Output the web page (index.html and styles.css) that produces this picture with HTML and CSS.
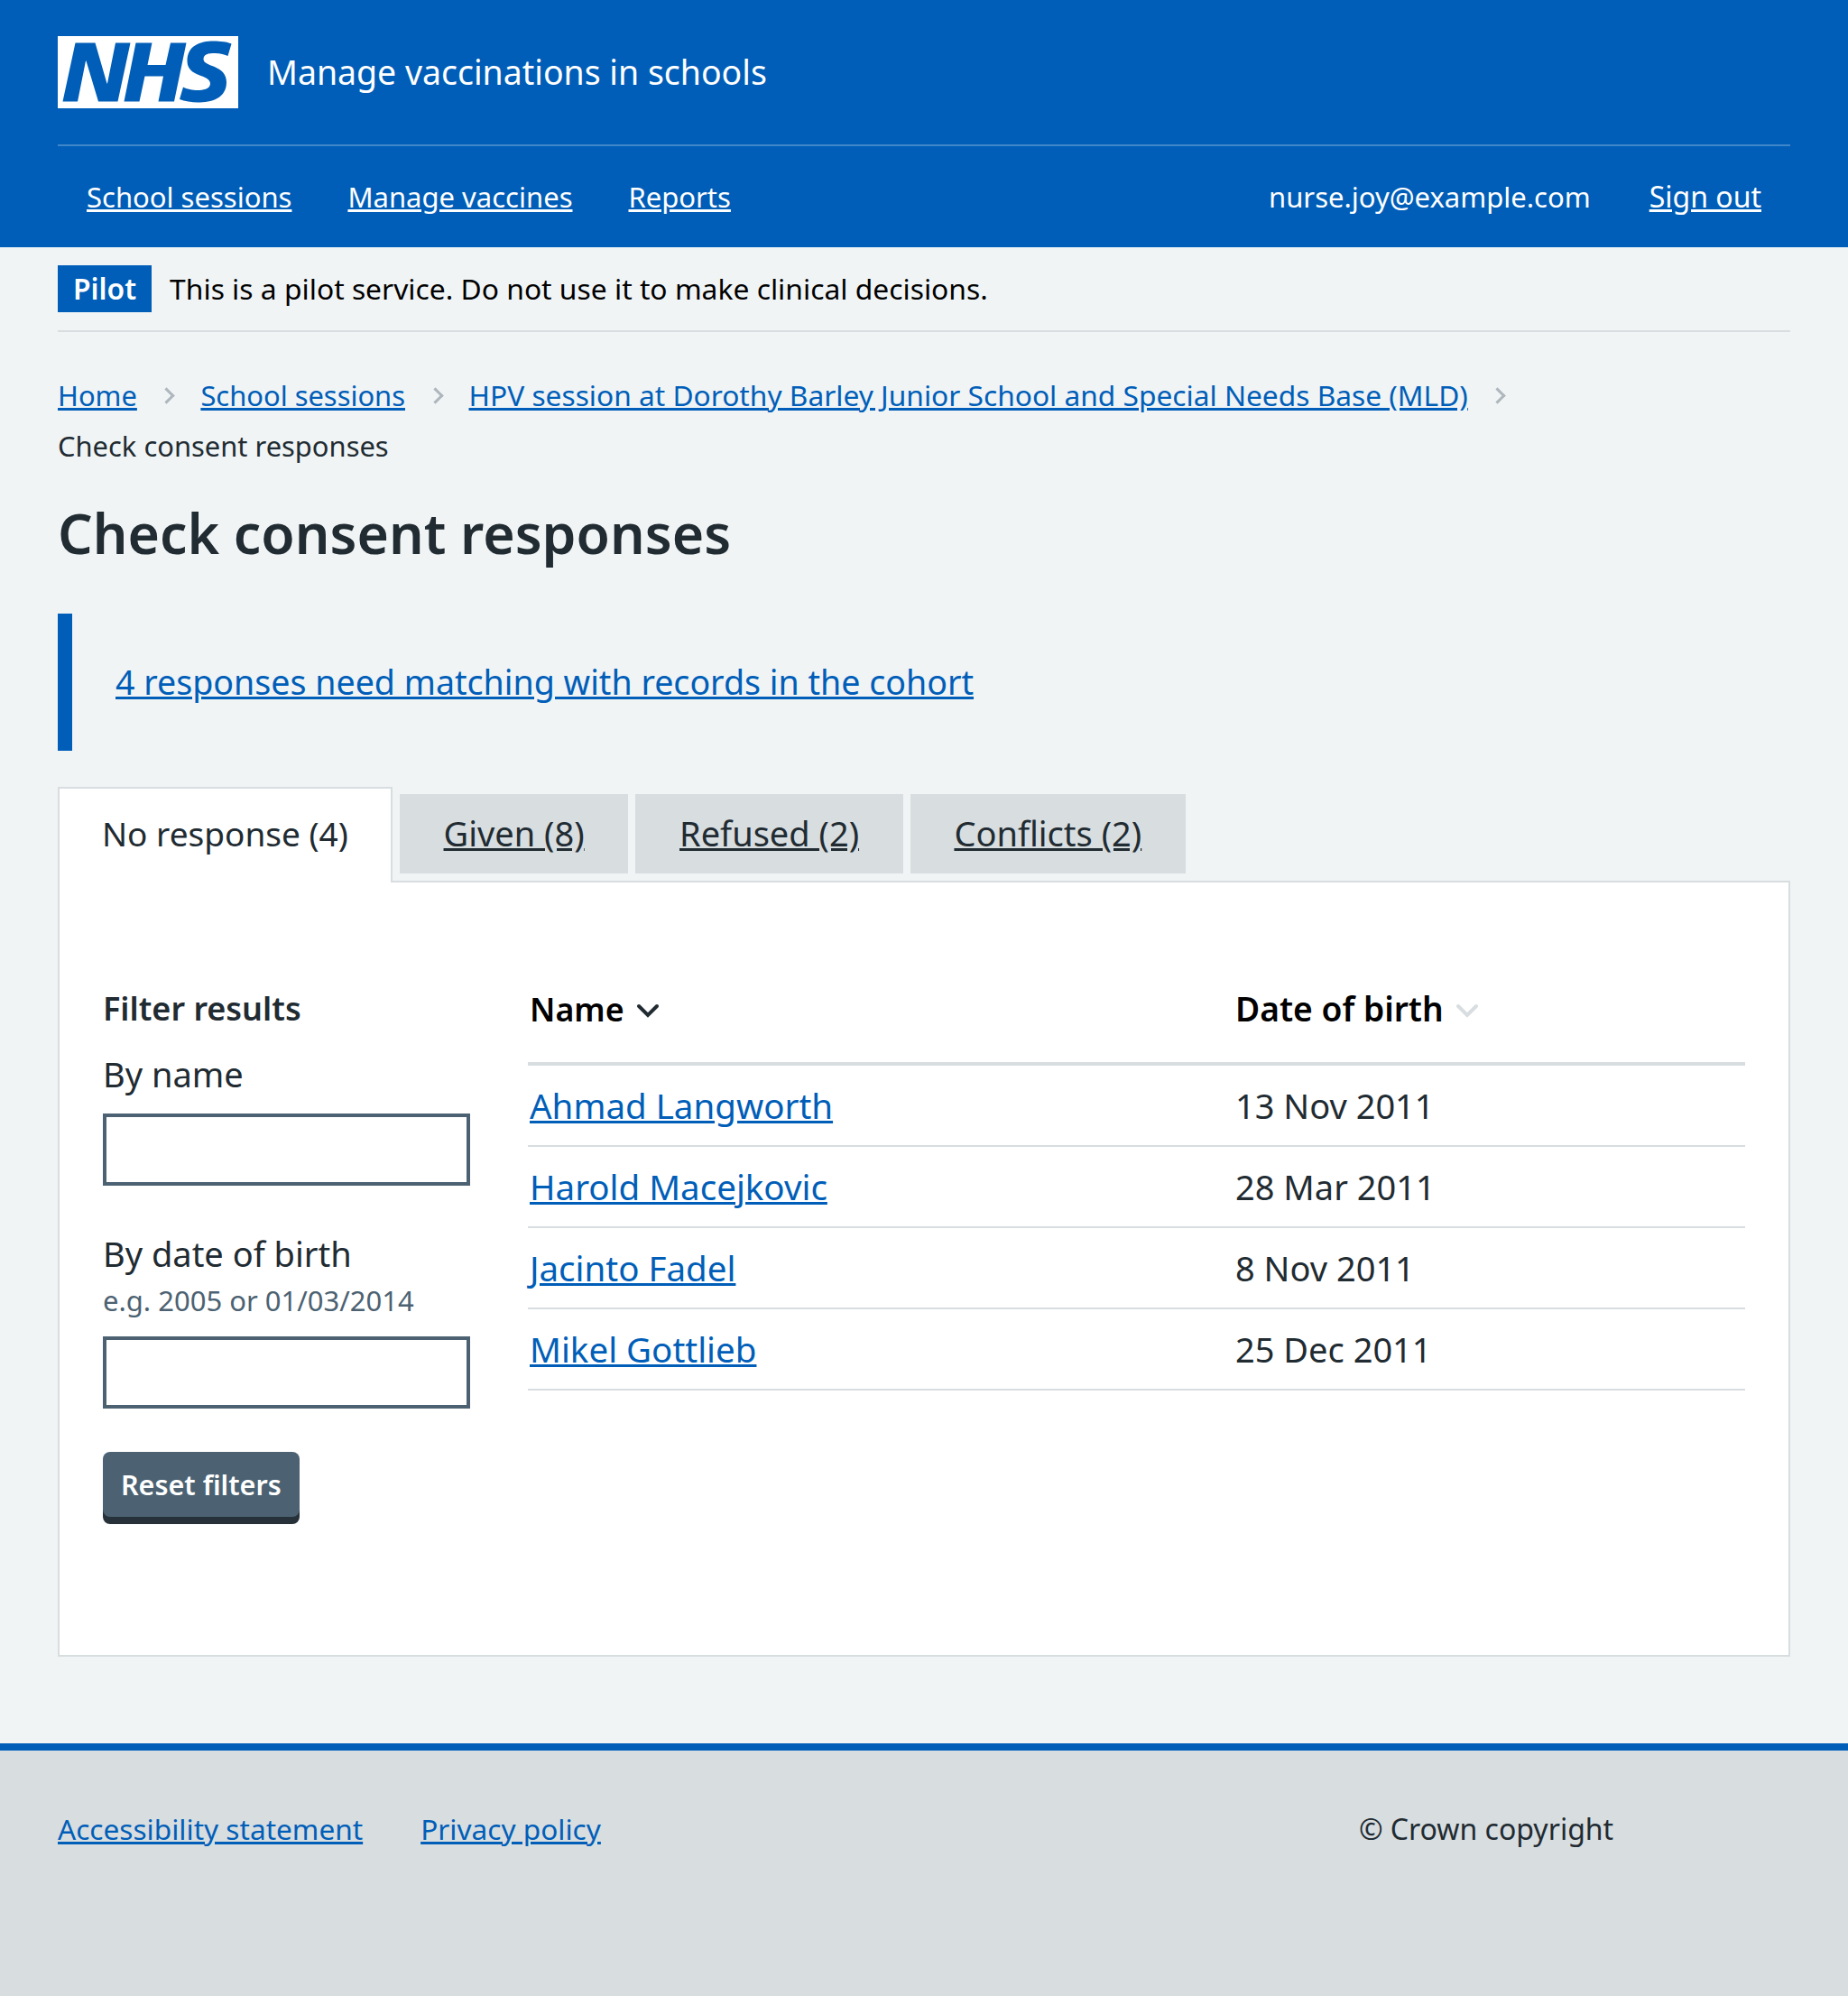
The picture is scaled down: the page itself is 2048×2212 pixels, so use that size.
FILE: index.html
```html
<!DOCTYPE html>
<html lang="en">
<head>
  <meta charset="UTF-8">
  <title>Check consent responses</title>
  <link rel="stylesheet" href="styles.css">
</head>
<body>
  <header class="site-header">
    <div class="brand">
      <svg class="logo" viewBox="0 0 40 16" aria-label="NHS">
        <path fill="#fff" d="M0 0h40v16H0z"/>
        <path fill="#005eb8" d="M3.9 1.5h4.4l2.6 9h.1l1.8-9h3.3l-2.8 13H9l-2.7-9h-.1l-1.8 9H1.1M17.3 1.5h3.6l-1 4.9h4L25 1.5h3.5l-2.7 13h-3.5l1.1-5.6h-4.1l-1.2 5.6h-3.4M37.7 4.4c-.7-.3-1.6-.6-2.9-.6-1.4 0-2.5.2-2.5 1.3 0 1.8 5.1 1.2 5.1 5.1 0 3.6-3.3 4.5-6.4 4.5-1.3 0-2.9-.3-4-.7l.8-2.7c.7.4 2.1.7 3.2.7s2.8-.2 2.8-1.5c0-2.1-5.1-1.3-5.1-5 0-3.4 2.9-4.4 5.8-4.4 1.6 0 3.1.2 4 .6"/>
      </svg>
      <span class="service-name">Manage vaccinations in schools</span>
    </div>
    <nav class="main-nav">
      <a href="#">School sessions</a>
      <a href="#">Manage vaccines</a>
      <a href="#">Reports</a>
      <span class="nav-user">nurse.joy@example.com</span>
      <a class="nav-signout" href="#">Sign out</a>
    </nav>
  </header>

  <div class="phase-banner">
    <strong class="phase-tag">Pilot</strong>
    <span>This is a pilot service. Do not use it to make clinical decisions.</span>
  </div>

  <main class="content">
    <ol class="breadcrumb">
      <li class="crumb-short"><a href="#">Home</a></li>
      <li class="crumb-short"><a href="#">School sessions</a></li>
      <li><a href="#">HPV session at Dorothy Barley Junior School and Special Needs Base (MLD)</a></li>
      <li class="crumb-short breadcrumb-current">Check consent responses</li>
    </ol>

    <h1>Check consent responses</h1>

    <div class="inset-text">
      <a href="#">4 responses need matching with records in the cohort</a>
    </div>

    <div class="tabs">
      <span class="tab tab-selected">No response (4)</span>
      <a class="tab" href="#">Given (8)</a>
      <a class="tab" href="#">Refused (2)</a>
      <a class="tab" href="#">Conflicts (2)</a>
    </div>

    <section class="panel">
      <form class="filters">
        <h2>Filter results</h2>
        <label class="filter-label" for="name">By name</label>
        <input class="filter-input filter-input-name" type="text" id="name">
        <label class="filter-label" for="dob">By date of birth</label>
        <div class="hint">e.g. 2005 or 01/03/2014</div>
        <input class="filter-input" type="text" id="dob">
        <button class="button" type="button">Reset filters</button>
      </form>

      <table class="results">
        <thead>
          <tr>
            <th class="col-name">Name
              <svg class="sort-icon" viewBox="0 0 26 16"><path d="M3 3l10 10L23 3"/></svg>
            </th>
            <th>Date of birth
              <svg class="sort-icon sort-icon-off" viewBox="0 0 26 16"><path d="M3 3l10 10L23 3"/></svg>
            </th>
          </tr>
        </thead>
        <tbody>
          <tr><td><a href="#">Ahmad Langworth</a></td><td>13 Nov 2011</td></tr>
          <tr><td><a href="#">Harold Macejkovic</a></td><td>28 Mar 2011</td></tr>
          <tr><td><a href="#">Jacinto Fadel</a></td><td>8 Nov 2011</td></tr>
          <tr><td><a href="#">Mikel Gottlieb</a></td><td>25 Dec 2011</td></tr>
        </tbody>
      </table>
    </section>
  </main>

  <footer class="site-footer">
    <a href="#">Accessibility statement</a>
    <a href="#">Privacy policy</a>
    <span class="copyright">© Crown copyright</span>
  </footer>
</body>
</html>
```
FILE: styles.css
```css
body {
  margin: 0;
  background-color: #f0f4f5;
  color: #212b32;
  font-family: "Noto Sans", sans-serif;
  font-size: 38px;
  line-height: 56px;
}
a {
  color: #005eb8;
}

/* header */
.site-header {
  background-color: #005eb8;
  color: white;
  height: 274px;
  padding: 0 64px;
  box-sizing: border-box;
}
.site-header a {
  color: white;
}
.brand {
  display: flex;
  align-items: center;
  gap: 32px;
  height: 162px;
  border-bottom: 2px solid rgba(255, 255, 255, 0.25);
  box-sizing: border-box;
}
.logo {
  width: 200px;
  height: 80px;
}
.service-name {
  font-size: 37.45px;
}
.main-nav {
  display: flex;
  align-items: center;
  gap: 62px;
  height: 112px;
  padding: 0 32px;
  font-size: 31px;
}
.nav-user {
  margin-left: auto;
  margin-right: 3px;
}
.nav-signout {
  font-size: 32px;
}

/* phase banner */
.phase-banner {
  display: flex;
  align-items: center;
  gap: 20px;
  height: 94px;
  margin: 0 64px;
  border-bottom: 2px solid #d8dde0;
  box-sizing: border-box;
  color: #000;
  font-size: 31.8px;
}
.phase-tag {
  background-color: #005eb8;
  color: white;
  padding: 0 17px;
  line-height: 52px;
  font-weight: 600;
}

.content {
  padding: 0 64px;
}

/* breadcrumb */
.breadcrumb {
  list-style: none;
  display: flex;
  flex-wrap: wrap;
  margin: 0;
  padding: 42px 0 0;
  font-size: 31.7px;
  line-height: 56px;
}
.breadcrumb li {
  display: flex;
  align-items: center;
}
.breadcrumb li:not(.breadcrumb-current)::after {
  content: "";
  width: 10px;
  height: 10px;
  margin: 0 31px 0 26.5px;
  border-top: 3px solid #aeb7bd;
  border-right: 3px solid #aeb7bd;
  transform: rotate(45deg);
}
.crumb-short {
  font-size: 30.9px;
}
.breadcrumb-current {
  flex-basis: 100%;
}

h1 {
  margin: 27px 0 0;
  font-size: 60.7px;
  line-height: 84px;
  font-weight: 600;
}

/* inset */
.inset-text {
  display: flex;
  align-items: center;
  height: 152px;
  margin-top: 47px;
  padding-left: 48px;
  border-left: 16px solid #005eb8;
  font-size: 37.6px;
}

/* tabs */
.tabs {
  display: flex;
  align-items: flex-end;
  gap: 8px;
  margin-top: 40px;
  margin-bottom: -2px;
  position: relative;
}
.tab {
  display: block;
  padding: 0 48.7px;
  height: 88px;
  line-height: 86px;
  margin-bottom: 10px;
  background-color: #d8dde0;
  color: #212b32;
}
.tab-selected {
  height: 104px;
  line-height: 100px;
  margin-bottom: 0;
  padding: 0 47px;
  background-color: white;
  border: 2px solid #d8dde0;
  border-bottom: 0;
  font-size: 37px;
}

/* panel */
.panel {
  display: flex;
  align-items: flex-start;
  gap: 64px;
  height: 860px;
  padding: 112px 48px 0;
  background-color: white;
  border: 2px solid #d8dde0;
  box-sizing: border-box;
}

.filters {
  width: 407px;
  flex-shrink: 0;
}
.filters h2 {
  margin: 0;
  font-size: 36px;
  line-height: 56px;
  font-weight: 600;
}
.filter-label {
  display: block;
  margin-top: 16px;
}
.filter-input {
  display: block;
  width: 100%;
  height: 80px;
  margin-top: 16px;
  border: 4px solid #4c6272;
  border-radius: 0;
  box-sizing: border-box;
  background-color: white;
}
.filter-input-name {
  margin-bottom: 47px;
}
.hint {
  color: #4c6272;
  font-size: 31px;
  line-height: 48px;
}
.button {
  display: block;
  margin-top: 48px;
  padding: 0 20px;
  height: 72px;
  background-color: #4c6272;
  color: white;
  border: 0;
  border-radius: 8px;
  box-shadow: 0 8px 0 #263139;
  font-family: inherit;
  font-size: 30.5px;
  font-weight: 600;
}

/* table */
.results {
  flex: 1;
  table-layout: fixed;
  border-collapse: collapse;
}
.results th {
  text-align: left;
  padding: 0 0 31px 2px;
  color: #000;
  font-size: 37.2px;
  font-weight: 600;
  border-bottom: 4px solid #d8dde0;
}
.results td {
  height: 88px;
  padding: 0 0 0 2px;
  border-bottom: 2px solid #d8dde0;
}
.results td a {
  font-size: 38.5px;
}
.results .col-name {
  width: 780px;
  font-size: 35.8px;
}
.sort-icon {
  width: 26px;
  height: 16px;
  margin-left: 4px;
  vertical-align: 4px;
  fill: none;
  stroke: #212b32;
  stroke-width: 4;
  stroke-linecap: round;
}
.sort-icon-off {
  stroke: #d8dde0;
}

/* footer */
.site-footer {
  display: flex;
  gap: 64px;
  margin-top: 96px;
  height: 280px;
  padding: 59px 64px 0;
  box-sizing: border-box;
  background-color: #d8dde0;
  border-top: 8px solid #005eb8;
  font-size: 31.6px;
}
.copyright {
  margin-left: 776px;
  font-size: 32px;
}
```
